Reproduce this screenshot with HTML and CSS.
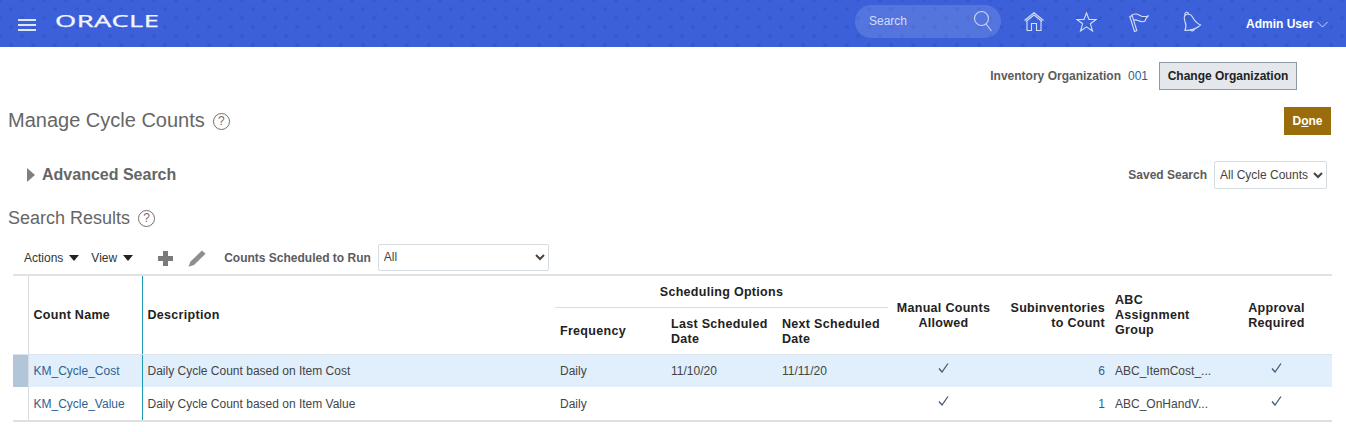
FILE: index.html
```html
<!DOCTYPE html>
<html lang="en">
<head>
    <meta charset="UTF-8">
    <title>Manage Cycle Counts</title>
    <link rel="stylesheet" href="styles.css">
</head>
<body>
    <header class="topbar">
        <div class="hamburger"><span></span><span></span><span></span></div>
        <div class="logo-box"><div class="logo">ORACLE</div></div>
        <div class="search">
            <span>Search</span>
            <svg width="20" height="22" viewBox="0 0 20 22" fill="none" stroke="#c9d6fa" stroke-width="1.1"><circle cx="8.500" cy="8.500" r="7"/><path d="M13 14l5.500 7"/></svg>
        </div>
        <svg class="nav-icon icon-home" width="20" height="19" viewBox="0 0 20 19" fill="none" stroke="#d5def9" stroke-width="1.1"><path d="M.5 8.500L10 .7l9.500 7.800M2 9.500L10 3l8 6.500M3 9v9.500h4.500v-7h5v7H17V9"/></svg>
        <svg class="nav-icon icon-star" width="21" height="20" viewBox="0 0 21 20" fill="none" stroke="#d5def9" stroke-width="1.1"><path d="M10.500 1l2.500 6.500h7l-5.600 4.300 2.100 7.200-6-4.200-6 4.200 2.100-7.200L1 7.500h7z"/></svg>
        <svg class="nav-icon icon-flag" width="20" height="20" viewBox="0 0 20 20" fill="none" stroke="#d5def9" stroke-width="1.1"><path d="M.8 4.500l2.400-.8 4.600 15-2.300.8zM2.200 3.500C6 .5 9 2.500 12 4c2.500 1 5 .5 7 0-1.500 1.500-2.500 3-3 5-2.500 1.500-5 .5-7-.5-1.500-.7-3-1-4.200-.2"/></svg>
        <svg class="nav-icon icon-bell" width="20" height="22" viewBox="0 0 20 22" fill="none" stroke="#d5def9" stroke-width="1.1"><path d="M3 4.500C5.500 2 9 3 10.500 6c1.500 3 3.500 6 8 8-3 3-9.500 5.500-15.500 5.500 1.500-3.500 1-6.500 0-9-.7-2.300-1.500-4.500 0-6zM3 4.500C2.500 3 3 1.500 4.500 1.300c1.500-.2 2.200 1 1.800 2.300M8 18.500c1 2 3.500 2 4.500-.5"/></svg>
        <div class="user">Admin User <svg width="11" height="7" viewBox="0 0 11 7" fill="none" stroke="#c9d6fa" stroke-width="1"><path d="M.5 1l5 5 5-5"/></svg></div>
    </header>

    <main>
        <div class="org-row">
            <span class="label">Inventory Organization</span>
            <a class="link org-code">001</a>
            <button class="org-btn">Change Organization</button>
        </div>

        <div class="title-row">
            <h1>Manage Cycle Counts</h1>
            <span class="help help-big">?</span>
            <button class="done-btn">D<u>o</u>ne</button>
        </div>

        <div class="search-row">
            <span class="tri"></span>
            <h2>Advanced Search</h2>
            <span class="label saved-label">Saved Search</span>
            <select class="saved-select"><option>All Cycle Counts</option></select>
        </div>

        <div class="results-row">
            <h3>Search Results</h3>
            <span class="help">?</span>
        </div>

        <div class="toolbar">
            <span class="menu">Actions</span>
            <span class="menu">View</span>
            <svg class="tool-add" width="15" height="15" viewBox="0 0 15 15" fill="#7b7b7b"><path d="M5 0h5v5h5v5h-5v5H5v-5H0V5h5z"/></svg>
            <svg class="tool-edit" width="18" height="17" viewBox="0 0 18 17" fill="#8e8e8e"><path d="M14 .5l3.500 3.300L6 15l-5.500 1.800L2.500 11.500z"/></svg>
            <span class="label">Counts Scheduled to Run</span>
            <select class="run-select"><option>All</option></select>
        </div>

        <table class="grid">
            <colgroup>
                <col class="c-sel"><col class="c-name"><col class="c-desc"><col class="c-freq"><col class="c-date"><col class="c-date">
                <col class="c-manual"><col class="c-sub"><col class="c-abc"><col class="c-appr">
            </colgroup>
            <thead>
                <tr class="head-top">
                    <th rowspan="2" class="sel"></th>
                    <th rowspan="2" class="name">Count Name</th>
                    <th rowspan="2" class="desc">Description</th>
                    <th colspan="3" class="group">Scheduling Options</th>
                    <th rowspan="2" class="center">Manual Counts<br>Allowed</th>
                    <th rowspan="2" class="right">Subinventories<br>to Count</th>
                    <th rowspan="2">ABC<br>Assignment<br>Group</th>
                    <th rowspan="2" class="center">Approval<br>Required</th>
                </tr>
                <tr class="head-sub">
                    <th>Frequency</th>
                    <th>Last Scheduled<br>Date</th>
                    <th>Next Scheduled<br>Date</th>
                </tr>
            </thead>
            <tbody>
                <tr class="selected">
                    <td class="sel"></td>
                    <td class="name"><a class="link">KM_Cycle_Cost</a></td>
                    <td class="desc">Daily Cycle Count based on Item Cost</td>
                    <td>Daily</td>
                    <td>11/10/20</td>
                    <td>11/11/20</td>
                    <td class="center"><svg class="check" width="11" height="10" viewBox="0 0 11 10" fill="none" stroke="#3f5a78" stroke-width="1.300"><path d="M1 5.500l3 3.500L10 .5"/></svg></td>
                    <td class="right"><a class="link">6</a></td>
                    <td>ABC_ItemCost_...</td>
                    <td class="center"><svg class="check" width="11" height="10" viewBox="0 0 11 10" fill="none" stroke="#3f5a78" stroke-width="1.300"><path d="M1 5.500l3 3.500L10 .5"/></svg></td>
                </tr>
                <tr>
                    <td class="sel"></td>
                    <td class="name"><a class="link">KM_Cycle_Value</a></td>
                    <td class="desc">Daily Cycle Count based on Item Value</td>
                    <td>Daily</td>
                    <td></td>
                    <td></td>
                    <td class="center"><svg class="check" width="11" height="10" viewBox="0 0 11 10" fill="none" stroke="#3f5a78" stroke-width="1.300"><path d="M1 5.500l3 3.500L10 .5"/></svg></td>
                    <td class="right"><a class="link">1</a></td>
                    <td>ABC_OnHandV...</td>
                    <td class="center"><svg class="check" width="11" height="10" viewBox="0 0 11 10" fill="none" stroke="#3f5a78" stroke-width="1.300"><path d="M1 5.500l3 3.500L10 .5"/></svg></td>
                </tr>
            </tbody>
        </table>
    </main>
</body>
</html>
```

FILE: styles.css
```css
* {
    box-sizing: border-box;
}
html, body {
    height: 432px;
    overflow: hidden;
}
body {
    margin: 0;
    font-family: "Liberation Sans", Arial, sans-serif;
    font-size: 12px;
    color: #333;
    background-color: #fff;
}

/* top bar */
.topbar {
    height: 47px;
    display: flex;
    align-items: center;
    padding-left: 18px;
    background-color: #3b60da;
    background-image: radial-gradient(circle, #3659cd 1.5px, transparent 2.5px), radial-gradient(circle, #3659cd 1.5px, transparent 2.5px);
    background-size: 22px 18px;
    background-position: 0 0, 11px 9px;
}
.hamburger {
    width: 18px;
    margin-top: 2px;
    display: flex;
    flex-direction: column;
    gap: 3px;
}
.hamburger span {
    height: 2px;
    background-color: #dfe6fc;
}
.logo-box {
    width: 800px;
    margin-left: 19px;
    margin-top: -5px;
}
.logo {
    font-family: "Noto Sans", Arial, sans-serif;
    font-size: 17px;
    line-height: 20px;
    letter-spacing: 0.3px;
    -webkit-text-stroke: 0.25px #f2f5ff;
    transform: scaleX(1.6);
    transform-origin: left;
    color: #f2f5ff;
}
.search {
    width: 146px;
    height: 33px;
    margin-top: -5px;
    padding: 0 8px 0 14px;
    border-radius: 17px;
    display: flex;
    align-items: center;
    justify-content: space-between;
    background-color: rgba(255, 255, 255, 0.13);
    color: #d5def9;
}
.nav-icon {
    margin-top: -4px;
    flex: none;
}
.icon-home {
    margin-left: 23px;
}
.icon-star {
    margin-left: 32px;
}
.icon-flag {
    margin-left: 32px;
}
.icon-bell {
    margin-left: 33px;
}
.user {
    margin-left: 44px;
    font-weight: bold;
    color: #fff;
    white-space: nowrap;
}

/* page */
main {
    padding: 15px 14px 0 8px;
}
.label {
    font-weight: bold;
    color: #5c5c5c;
}
.link {
    color: #2f5f8f;
    text-decoration: none;
}
.org-row {
    height: 28px;
    padding-right: 35px;
    display: flex;
    align-items: center;
    justify-content: flex-end;
}
.org-code {
    margin-left: 7px;
}
.org-btn {
    width: 138px;
    height: 28px;
    margin-left: 11px;
    padding: 0;
    font: bold 12px "Liberation Sans", Arial, sans-serif;
    color: #222;
    background-color: #e4e8ec;
    border: 1px solid #8d9aa8;
}
.title-row {
    height: 28px;
    margin-top: 17px;
    padding-right: 1px;
    display: flex;
    align-items: center;
}
h1 {
    margin: 0 0 2px;
    font-size: 20px;
    font-weight: normal;
    color: #666;
}
h2 {
    margin: 0;
    font-size: 16px;
    font-weight: bold;
    color: #666;
}
h3 {
    margin: 0;
    font-size: 18px;
    font-weight: normal;
    color: #666;
}
.help {
    width: 17px;
    height: 17px;
    margin-left: 8px;
    border: 1px solid #707070;
    border-radius: 50%;
    display: flex;
    align-items: center;
    justify-content: center;
    font-size: 12px;
    color: #707070;
}
.done-btn {
    width: 47px;
    height: 28px;
    margin-left: auto;
    padding: 0;
    font: bold 12px "Liberation Sans", Arial, sans-serif;
    color: #fff;
    background-color: #9a6c0c;
    border: none;
}
.search-row {
    height: 28px;
    margin-top: 26px;
    padding-left: 19px;
    padding-right: 5px;
    display: flex;
    align-items: center;
}
.tri {
    width: 0;
    height: 0;
    border-left: 8px solid #808080;
    border-top: 7px solid transparent;
    border-bottom: 7px solid transparent;
}
.search-row h2 {
    margin-left: 7px;
}
.saved-label {
    margin-left: auto;
}
.saved-select {
    width: 113px;
    height: 28px;
    margin-left: 7px;
    padding: 0 0 0 1px;
    font: 12px "Liberation Sans", Arial, sans-serif;
    color: #444;
    background-color: #fff;
    border: 1px solid #d5dce2;
    border-radius: 2px;
}
.results-row {
    height: 24px;
    margin-top: 17px;
    display: flex;
    align-items: center;
}
.toolbar {
    height: 28px;
    margin-top: 13px;
    padding-left: 16px;
    display: flex;
    align-items: center;
}
.menu {
    display: flex;
    align-items: center;
    gap: 6px;
    margin-top: 2px;
    margin-right: 12px;
    color: #333;
}
.menu::after {
    content: "";
    border-left: 5px solid transparent;
    border-right: 5px solid transparent;
    border-top: 6px solid #222;
}
.tool-add {
    margin-top: 2px;
    margin-left: 13px;
}
.tool-edit {
    margin-top: 2px;
    margin-left: 15px;
}
.toolbar .label {
    margin-top: 2px;
    margin-left: 18px;
}
.run-select {
    width: 171px;
    height: 27px;
    margin-left: 7px;
    padding: 0 0 0 1px;
    font: 12px "Liberation Sans", Arial, sans-serif;
    color: #444;
    background-color: #fff;
    border: 1px solid #d5dce2;
    border-radius: 2px;
}

/* table */
.grid {
    width: 1319px;
    margin: 3px 0 0 5px;
    table-layout: fixed;
    border-collapse: collapse;
    border-top: 2px solid #e2e2e2;
    border-bottom: 2px solid #dfdfdf;
}
.c-sel { width: 15px; }
.c-name { width: 114px; }
.c-desc { width: 413px; }
.c-freq { width: 111px; }
.c-date { width: 111px; }
.c-manual { width: 111px; }
.c-sub { width: 111px; }
.c-abc { width: 111px; }
.c-appr { width: 111px; }
th, td {
    padding: 0 5px;
    text-align: left;
    white-space: nowrap;
    overflow: hidden;
}
th {
    padding-top: 2px;
    font-size: 12.500px;
    font-weight: bold;
    line-height: 15px;
    color: #222;
    letter-spacing: 0.3px;
    vertical-align: middle;
    border-bottom: 1px solid #dde3ea;
}
td {
    height: 33px;
    color: #444;
}
tbody tr:last-child td {
    height: 34px;
}
.head-top th {
    height: 32px;
}
.head-sub th {
    height: 47px;
}
th.group {
    text-align: center;
    border-bottom: 1px solid #dcdcdc;
}
th.center, td.center {
    text-align: center;
}
th.right, td.right {
    text-align: right;
}
.name {
    border-left: 1px solid #d9dee3;
}
.desc {
    border-left: 1px solid #1f9cb5;
}
.sel {
    padding: 0;
}
.selected td {
    background-color: #e0effb;
}
.selected td.sel {
    background-color: #b1c6d8;
}
.check {
    margin-bottom: 5px;
    vertical-align: middle;
}
```
